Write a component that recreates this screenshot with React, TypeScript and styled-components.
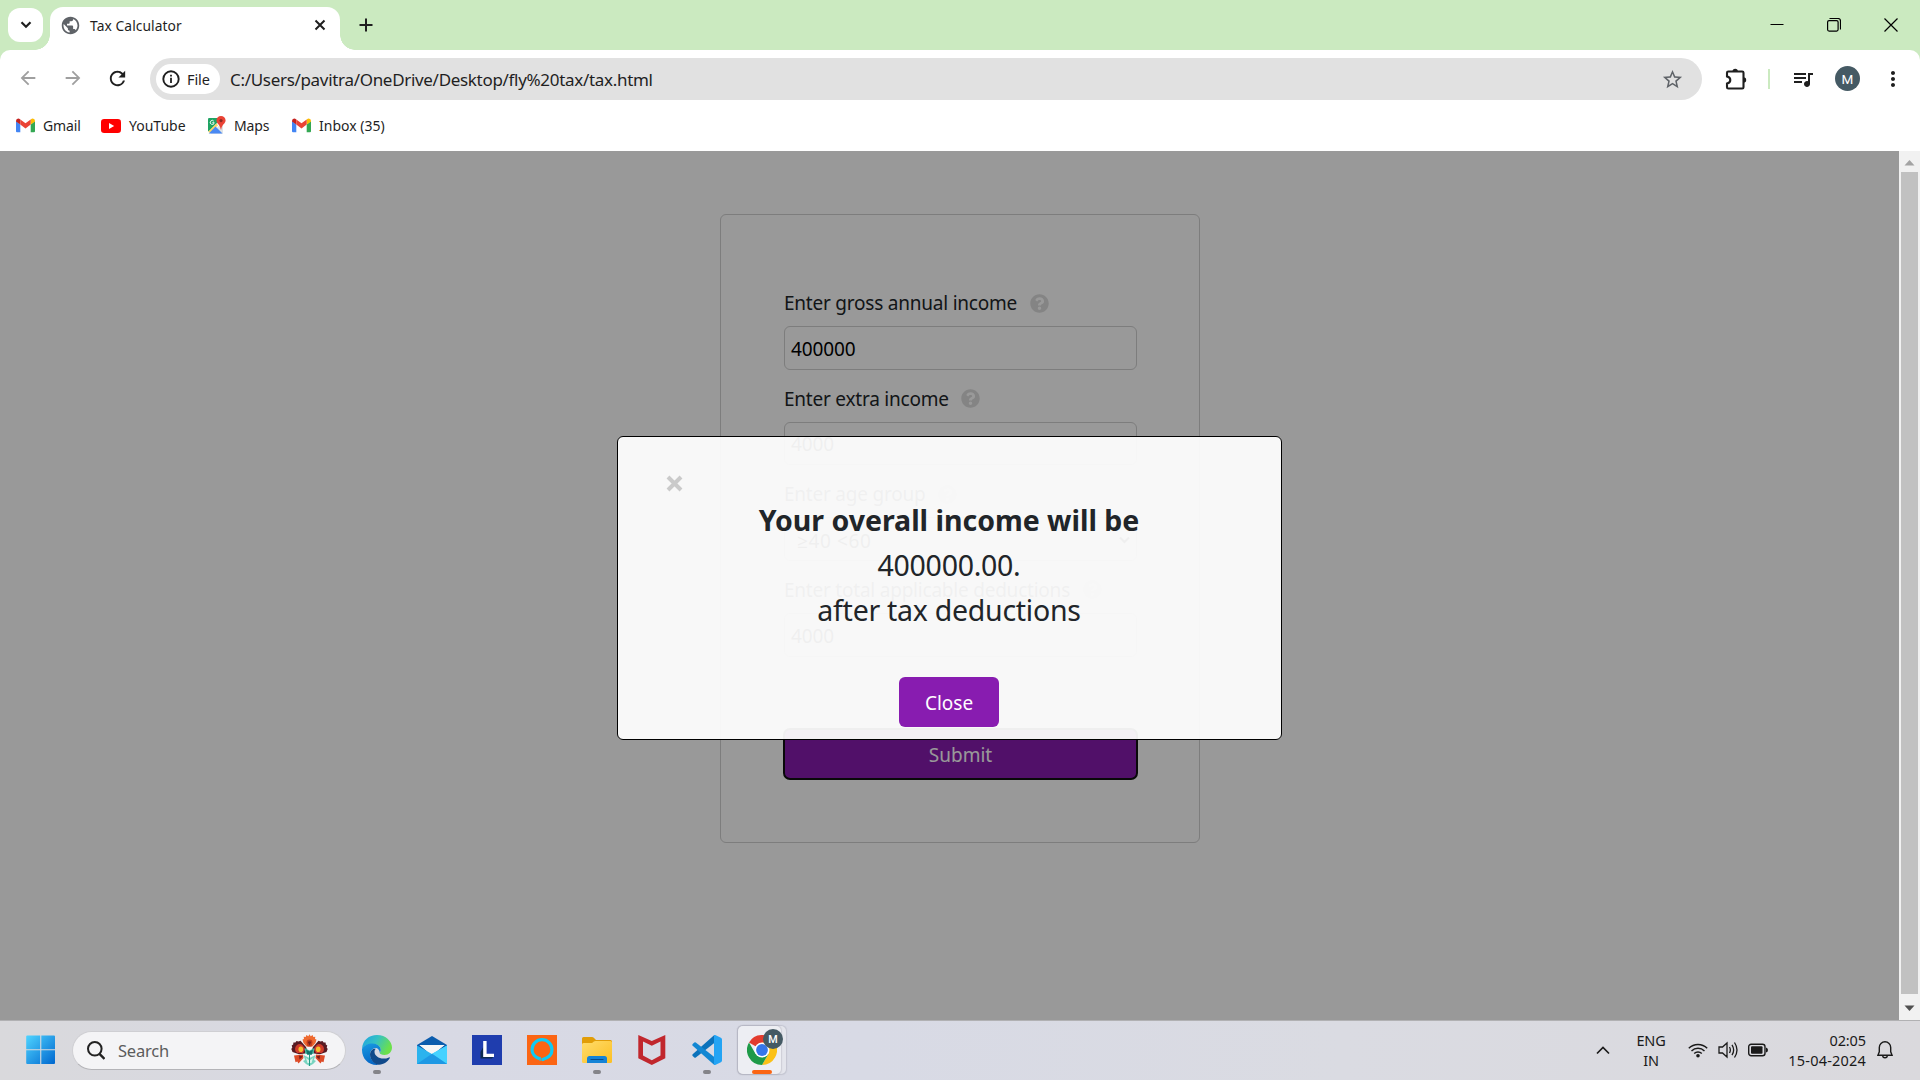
import React from 'react';
import styled, { createGlobalStyle } from 'styled-components';
import { MdPublic, MdRefresh, MdStarBorder, MdQueueMusic, MdMoreVert, MdArrowBack, MdArrowForward } from 'react-icons/md';
import { FaQuestionCircle } from 'react-icons/fa';

const Global = createGlobalStyle`
  * { box-sizing: border-box; }
  body { margin: 0; overflow: hidden; font-family: "Noto Sans", "Open Sans", sans-serif; color: #1f1f1f; }
  button, input { font-family: inherit; }
  svg { display: block; flex: none; }
`;

const Screen = styled.div`
  width: 1920px;
  height: 1080px;
  display: flex;
  flex-direction: column;
  overflow: hidden;
`;

const Label = styled.span<{ $size: number; $track?: number }>`
  font-size: ${p => p.$size}px;
  letter-spacing: ${p => p.$track ?? 0}px;
  line-height: 20px;
  white-space: nowrap;
`;

/* ---------- browser chrome ---------- */

const TabStrip = styled.div`
  height: 50px;
  background: #cbeac0;
  display: flex;
  align-items: flex-start;
  padding: 7px 0 0 8px;
`;

const TabSearch = styled.div`
  width: 35px;
  height: 34px;
  margin: 1px 7px 0 0;
  border-radius: 12px;
  background: #fff;
  display: grid;
  place-items: center;
`;

const Tab = styled.div`
  position: relative;
  width: 290px;
  height: 43px;
  padding: 0 14px 7px 10px;
  background: #fff;
  border-radius: 13px 13px 0 0;
  display: flex;
  align-items: center;
  &::before, &::after {
    content: '';
    position: absolute;
    bottom: 0;
    width: 15px;
    height: 15px;
  }
  &::before { left: -15px; background: radial-gradient(circle at 0 0, transparent 14.5px, #fff 15px); }
  &::after { right: -15px; background: radial-gradient(circle at 100% 0, transparent 14.5px, #fff 15px); }
`;

const TabTitle = styled(Label)`
  flex: 1;
  margin-left: 9px;
  padding-top: 1px;
`;

const NewTab = styled.div`
  margin: 11px 0 0 18.5px;
`;

const WindowControls = styled.div`
  margin: 11px 22px 0 auto;
  display: flex;
  align-items: center;
  gap: 43px;
`;

const ToolbarBack = styled.div`
  background: #cbeac0;
`;

const Toolbar = styled.div`
  height: 57px;
  background: #fff;
  border-radius: 10px 10px 0 0;
  display: flex;
  align-items: center;
  padding-left: 17px;
`;

const Nav = styled.div`
  display: flex;
  gap: 22.5px;
  color: #9f9f9f;
  width: 133px;
`;

const Omnibox = styled.div`
  width: 1552px;
  height: 42px;
  margin-top: 1px;
  padding: 0 18px 0 6px;
  border-radius: 21px;
  background: #e1e1e1;
  display: flex;
  align-items: center;
`;

const FileChip = styled.div`
  width: 64px;
  height: 30px;
  border-radius: 15px;
  background: #fff;
  display: flex;
  align-items: center;
  gap: 7px;
  padding-left: 6px;
  margin-right: 10px;
`;

const Url = styled(Label)`
  flex: 1;
  padding-top: 1px;
`;

const Actions = styled.div`
  display: flex;
  align-items: center;
  margin-left: 22px;
`;

const Divider = styled.div`
  width: 2px;
  height: 20px;
  margin: 0 21px 0 20px;
  background: #cbeac0;
`;

const Avatar = styled.div<{ $d: number }>`
  width: ${p => p.$d}px;
  height: ${p => p.$d}px;
  border-radius: 50%;
  background: #455a64;
  color: #fff;
  display: grid;
  place-items: center;
  font: ${p => (p.$d > 22 ? 400 : 500)} ${p => p.$d * 0.54}px Roboto, sans-serif;
`;

const Bookmarks = styled.div`
  height: 44px;
  background: #fff;
  display: flex;
  align-items: center;
  padding: 0 0 7px 16px;
`;

const Bookmark = styled.div<{ $w: number; $gap: number }>`
  width: ${p => p.$w}px;
  display: flex;
  align-items: center;
  gap: ${p => p.$gap}px;
`;

/* ---------- web page ---------- */

const Viewport = styled.div`
  height: 869px;
  display: flex;
`;

const Page = styled.main`
  position: relative;
  flex: 1;
  background: #fff;
  color: #212529;
`;

const Card = styled.div`
  width: 480px;
  height: 629px;
  margin: 63px 0 0 720px;
  padding: 73px 62px 0 63px;
  border: 1px solid #d0d0d0;
  border-radius: 6px;
  display: flex;
  flex-direction: column;
`;

const Field = styled.div`
  margin-bottom: 13.8px;
`;

const FieldLabel = styled.label`
  height: 30px;
  margin-bottom: 8px;
  display: flex;
  align-items: center;
  gap: 12.500px;
  font-size: 19px;
  letter-spacing: -0.22px;
  white-space: nowrap;
  svg { color: #dcdcdc; }
`;

const Box = styled.div<{ $indent?: boolean }>`
  height: 43.8px;
  border: 1px solid #d0d0d0;
  border-radius: 6px;
  padding: ${p => (p.$indent ? 3 : 2)}px 5px 0 ${p => (p.$indent ? 12 : 6)}px;
  display: flex;
  align-items: center;
  justify-content: space-between;
  font-size: 19px;
  letter-spacing: ${p => (p.$indent ? 0.6 : -0.1)}px;
  color: #000;
`;

const Submit = styled.button`
  height: 52px;
  margin: 58px -1px 0;
  padding: 2px 0 0;
  border: 2px solid #101010;
  border-radius: 7px;
  background: #881cb0;
  color: #fff;
  font-size: 19px;
`;

const Overlay = styled.div`
  position: absolute;
  inset: 0;
  background: rgba(0, 0, 0, 0.4);
  display: flex;
  justify-content: center;
  align-items: flex-start;
`;

const Modal = styled.div`
  position: relative;
  width: 665px;
  height: 304px;
  margin-top: 285px;
  padding: 61px 1px 0 0;
  border: 1px solid #000;
  border-radius: 6px;
  background: rgba(254, 254, 254, 0.94);
  display: flex;
  flex-direction: column;
  align-items: center;
`;

const Dismiss = styled.div`
  position: absolute;
  left: 48px;
  top: 38px;
`;

const Message = styled.p`
  margin: 0 0 44px;
  font-size: 28.5px;
  line-height: 45px;
  letter-spacing: -0.27px;
  text-align: center;
`;

const Strong = styled.strong`
  letter-spacing: -0.02px;
`;

const CloseButton = styled.button`
  width: 100px;
  height: 50px;
  padding: 2px 0 0;
  border: 0;
  border-radius: 6px;
  background: #881cb0;
  color: #fff;
  font-size: 19px;
`;

const Scrollbar = styled.div`
  width: 21px;
  background: #f1f1f1;
  display: flex;
  flex-direction: column;
  align-items: center;
`;

const Thumb = styled.div`
  width: 17px;
  height: 822px;
  background: #c1c1c1;
`;

/* ---------- taskbar ---------- */

const Taskbar = styled.footer`
  height: 60px;
  border-top: 1px solid #b1b1b3;
  background: linear-gradient(90deg, #d9d9dc 0, #d8d9e4 22%, #d8dae5 45%, #dadbe2 70%, #dad9dd 100%);
  display: flex;
  align-items: center;
  padding: 0 27px 1px 26px;
  color: #1a1a1a;
`;

const Search = styled.div`
  width: 274px;
  height: 39px;
  margin: 0 16px 0 16px;
  padding: 0 17px 0 14px;
  border-radius: 20px;
  border: 1px solid #cfcfd3;
  border-bottom-color: #b4b4b8;
  background: #f4f4f6;
  display: flex;
  align-items: center;
  color: #5c5c5c;
`;

const SearchText = styled(Label)`
  flex: 1;
  margin-left: 13px;
  padding-top: 1px;
`;

const Apps = styled.div`
  display: flex;
  gap: 25px;
`;

const AppSlot = styled.div<{ $running?: boolean; $active?: boolean }>`
  position: relative;
  width: 30px;
  height: 30px;
  display: grid;
  place-items: center;
  &::after {
    content: '';
    display: ${p => (p.$running || p.$active ? 'block' : 'none')};
    position: absolute;
    top: 35px;
    left: ${p => (p.$active ? 5 : 11)}px;
    width: ${p => (p.$active ? 20 : 8)}px;
    height: 4px;
    border-radius: 2px;
    background: ${p => (p.$active ? '#fb6514' : '#848489')};
  }
`;

const ActiveTile = styled.div<{ $behind?: boolean }>`
  position: absolute;
  left: -9px;
  top: -9px;
  width: ${p => (p.$behind ? 48 : 43)}px;
  height: 48px;
  border-radius: 5px;
  background: ${p => (p.$behind ? '#e4e5ec' : '#edeef3')};
  box-shadow: 0 0 1px 0.5px rgba(120, 120, 135, 0.2);
`;

const Layer = styled.div`
  position: relative;
`;

const Badge = styled.div`
  position: absolute;
  left: 16px;
  top: -6px;
`;

const Tray = styled.div`
  margin-left: auto;
  display: flex;
  align-items: center;
`;

const Stack = styled.div<{ $align: string; $w: number }>`
  width: ${p => p.$w}px;
  display: flex;
  flex-direction: column;
  align-items: ${p => p.$align};
`;

const Spacer = styled.div<{ $w: number }>`
  width: ${p => p.$w}px;
`;

/* ---------- drawings ---------- */

const Gmail = () => (
  <svg width="19" height="15" viewBox="0 0 19 15">
    <path d="M0 3v10.200a1 1 0 0 0 1 1h3.300V6.500Z" fill="#4285f4" />
    <path d="M19 3v10.200a1 1 0 0 1-1 1h-3.300V6.500Z" fill="#34a853" />
    <path d="M0 3Q0 .5 2.200.5q1 0 2.100.9V6.600L0 3.400Z" fill="#c5221f" />
    <path d="M19 3Q19 .5 16.800.5q-1 0-2.100.9V6.600L19 3.400Z" fill="#fbbc04" />
    <path d="M4.300 1.400 9.500 5.300l5.200-3.900v5.200L9.500 10.500 4.300 6.600Z" fill="#ea4335" />
  </svg>
);

const YouTube = () => (
  <svg width="20" height="14" viewBox="0 0 20 14">
    <rect width="20" height="14" rx="3.200" fill="#f00" />
    <path d="M8 4v6l5.200-3Z" fill="#fff" />
  </svg>
);

const Maps = () => (
  <svg width="19" height="19" viewBox="0 0 19 19">
    <rect x="1" y="2" width="15" height="16" rx="1.500" fill="#dfe3e6" />
    <path d="M1 15V3.200Q1 2 2.200 2H12v3L2.500 15.500Z" fill="#1fa463" />
    <path d="m1.200 16 12-12 2.600 2L3.200 18H2Q1 18 1 17Z" fill="#fff" />
    <path d="m1.300 15.500 8-8 1.800 1.800-8 8Z" fill="#fdd663" />
    <path d="m8.500 10.500 7 7H1.800Z" fill="#4a89f3" />
    <path d="M6.800 5.200a2 2 0 1 0 .4 1.500H5.300" fill="none" stroke="#fff" strokeWidth="0.9" />
    <path d="M14 0a4.600 4.600 0 0 0-4.600 4.600c0 3 3.900 4.400 4.300 8.700.1.500.500.500.600 0 .3-4.300 4.300-5.700 4.300-8.700A4.600 4.600 0 0 0 14 0Z" fill="#ea4335" />
    <circle cx="14" cy="4.600" r="1.600" fill="#8c2a22" />
  </svg>
);

const Flower = () => (
  <svg width="37" height="33" viewBox="0 0 37 33">
    <path d="m12.500 9-1-3.500L13 5l-.3-2.200 2 .2.600-2 2 1.200L18.500.3l1.200 1.900 2-1.200.6 2 2-.2L24 5l1.500.5-1 3.500-3 3.500h-6Z" fill="#ee6a30" />
    <path d="M15.500 8.500q0-3 3-3t3 3l-1 4h-4Z" fill="#c63d1c" />
    <path d="M16.800 8q1.700-1.500 3.400 0l-1.700 3.500Z" fill="#7b2218" />
    <path d="M1.500 18 .3 15l1-1.500-.6-2 1.500-1 .2-2 2 0L5.500 7l2 .6 2-.8L15 13l1 3-2 3.500-6 .8Z" fill="#571a22" />
    <path d="M35.500 18l1.200-3-1-1.500.6-2-1.500-1-.2-2-2 0L31.500 7l-2 .6-2-.8L22 13l-1 3 2 3.500 6 .8Z" fill="#571a22" />
    <path d="M4 14.500Q5 10 9 10q3.500.5 5 5.500L12 19H6.500Q4 18 4 14.500Z" fill="#cf3a2a" />
    <path d="M33 14.500Q32 10 28 10q-3.500.5-5 5.500l2 3.500h5.500q2.500-1 2.500-4.500Z" fill="#cf3a2a" />
    <ellipse cx="9.800" cy="15.300" rx="2.300" ry="2.800" fill="#f4bd2c" />
    <ellipse cx="27.200" cy="15.300" rx="2.300" ry="2.800" fill="#f4bd2c" />
    <path d="m3 21.500 9-1 .5 3.500-5 5.500-1.200-2-1.800.8Z" fill="#dd4b27" />
    <path d="m34 21.500-9-1-.5 3.500 5 5.500 1.200-2 1.800.8Z" fill="#dd4b27" />
    <path d="m8 21.500 4 1-3.500 3Zm21 0-4 1 3.500 3Z" fill="#7c1c1c" />
    <path d="m13.500 14 5 2.500 5-2.500-1 6h-8Z" fill="#44b9a2" />
    <path d="m15 15.500 3.500 2 3.500-2-1.200 5.200h-4.600Z" fill="#11756c" />
    <path d="m12.500 21 6 3 6-3-1.500 5 2 1-3 3-3.500 2-3.500-2-3-3 2-1Z" fill="#79d4c0" />
    <path d="m15 24 3.500 2.500L22 24l-1.500 5h-4Z" fill="#d9f3ea" />
    <path d="M18 20h1v12h-1Z" fill="#1e9c86" />
  </svg>
);

const Windows = () => (
  <svg width="30" height="30" viewBox="0 0 30 30">
    <defs>
      <linearGradient id="win" x1="0" y1="0" x2="1" y2="1">
        <stop offset="0" stopColor="#4fd4ff" />
        <stop offset="1" stopColor="#0067cf" />
      </linearGradient>
    </defs>
    <path d="M1.200.5H14.200V14.200H.200V1.500a1 1 0 0 1 1-1ZM15.300.5H28a1 1 0 0 1 1 1V14.200H15.300ZM.2 15.300h14V29H1.200a1 1 0 0 1-1-1ZM15.300 15.300H29V28a1 1 0 0 1-1 1H15.300Z" fill="url(#win)" />
  </svg>
);

const Edge = () => (
  <svg width="30" height="30" viewBox="0 0 30 30">
    <defs>
      <linearGradient id="e1" x1="0" y1="0" x2="1" y2=".4">
        <stop offset="0" stopColor="#1da1e6" />
        <stop offset=".5" stopColor="#35c1c4" />
        <stop offset="1" stopColor="#6be04c" />
      </linearGradient>
      <linearGradient id="e2" x1="0" y1="0" x2=".3" y2="1">
        <stop offset="0" stopColor="#199be2" />
        <stop offset="1" stopColor="#0667c6" />
      </linearGradient>
    </defs>
    <path d="M0 14C.5 5 7 0 15 0c9 0 15 6.500 15 12.500C30 17 26.800 20 22.500 20c-3 0-4.700-.8-4.700-1.900 0-.8 1-1.300 1-3.100C18.800 12 16 9 11 9 6 9 1.500 11 0 14Z" fill="url(#e1)" />
    <path d="M0 14C1.500 10.500 6 8.500 10.500 8.500c5 0 8.300 3 8.300 6.500 0 1.500-.8 2-1 3 0-3-2-5-4.300-5-3 0-5.500 3-5.500 6.500 0 5 4 9 9 10.300C7 31 0 24 0 15Z" fill="url(#e2)" />
    <path d="M11.500 13.700C8.800 15 8 17.500 8 19.500c0 6 5 10 9 10.300 5-.3 8.500-3 10.700-6.500.4-.8-.2-1.200-.8-.9-1.800.9-3.400 1.200-5.400 1.200-5 0-9-3-9-6.800 0-1.200.5-2.300 1.500-3Z" fill="#114a8b" />
  </svg>
);

const Mail = () => (
  <svg width="30" height="30" viewBox="0 0 30 30">
    <path d="M0 10 15 1l15 9v6H0Z" fill="#0b5cad" />
    <path d="M2.500 10h25L17 19h-4Z" fill="#f6f6f6" />
    <path d="M0 10.500 15 19 30 10.500V29H0Z" fill="#2bb3ee" />
    <path d="M2.500 10h25L15 18.700Z" fill="#f6f6f6" />
    <path d="M30 10.500V29L15 18.700Z" fill="#45d2ff" />
    <path d="M0 29 15 18.700 30 29Z" fill="#1e98e4" />
  </svg>
);

const LApp = () => (
  <svg width="30" height="30" viewBox="0 0 30 30">
    <path d="M0 0h30v30H0Z" fill="#1f3dae" />
    <path d="M8.500 23.500V17l2.700-5V22h10l-1.200 1.500Z" fill="#0d2b50" />
    <path d="M11.200 6h3.400v12.700H22V22H11.200Z" fill="#fff" />
  </svg>
);

const Alexa = () => (
  <svg width="30" height="30" viewBox="0 0 30 30">
    <path d="M0 0h30v30H0Z" fill="#fb6514" />
    <path d="M12.800 23.700C8.500 22.500 5 19.200 5 14.700a10 10 0 1 1 20 0c0 5-4.500 8.500-10 10" fill="none" stroke="#0fcbf5" strokeWidth="3.200" />
    <path d="M12.500 22v3.700h1.300V22ZM14.500 23.200q4 0 5.500-1l-1.500 2.300Q16.500 26 14.500 26Z" fill="#0fcbf5" />
  </svg>
);

const Folder = () => (
  <svg width="30" height="30" viewBox="0 0 30 30">
    <defs>
      <linearGradient id="fo" x1="0" y1="0" x2="1" y2="1">
        <stop offset="0" stopColor="#ffdc6c" />
        <stop offset="1" stopColor="#fcbf22" />
      </linearGradient>
    </defs>
    <path d="M0 3.500Q0 2 1.500 2H10q1 0 1.800.8L14 5h14.500Q30 5 30 6.500V12H0Z" fill="#e19d08" />
    <path d="M0 9.500Q0 8 1.500 8H9q1 0 1.800-.6l1-.8Q12.500 6 13.500 6h15Q30 6 30 7.500v19.200Q30 28 28.500 28h-27Q0 28 0 26.700Z" fill="url(#fo)" />
    <path d="M5 28v-4.500Q5 21 7.500 21h15Q25 21 25 23.500V28Z" fill="#1583d6" />
    <path d="M8.500 24h13v1h-13Z" fill="#0a4c8a" />
  </svg>
);

const McAfee = () => (
  <svg width="30" height="30" viewBox="0 0 30 30">
    <path d="M1.300 0 14.800 6 28.300 0v23.200L14.800 30 1.300 23.200ZM6 6.500V20.500l8.800 4.800 8.700-4.800V6.500l-8.700 4.200Z" fill="#c1272d" fillRule="evenodd" />
  </svg>
);

const VsCode = () => (
  <svg width="30" height="30" viewBox="0 0 30 30">
    <path d="M22.300 0 .7 19.300q-.8.8 0 1.600l1.600 1.500q.7.600 1.500.1L22.300 8Z" fill="#0b72bb" />
    <path d="M22.300 30 .7 10.700q-.8-.8 0-1.600l1.600-1.500q.7-.6 1.500-.1L22.300 22Z" fill="#1287d3" />
    <path d="M22 0q.6-.2 1.200.1l5.700 2.700Q30 3.300 30 4.500v21q0 1.200-1.100 1.700l-5.700 2.700q-.6.200-1.200.1Z" fill="#24a4f4" />
  </svg>
);

const ChromeLogo = () => (
  <svg width="30" height="30" viewBox="0 0 30 30">
    <path d="M15 15 2 7.500A15 15 0 0 1 28 7.500Z" fill="#e33b2e" />
    <path d="M15 7.500H28A15 15 0 0 1 15 30l6.500-11.200Z" fill="#fbc116" />
    <path d="M21.500 18.800 15 30A15 15 0 0 1 2 7.500l6.500 11.300Z" fill="#1e9a48" />
    <circle cx="15" cy="15" r="7.500" fill="#fff" />
    <circle cx="15" cy="15" r="5.900" fill="#3576ea" />
  </svg>
);

const Help = () => <FaQuestionCircle size={19} />;

const pinned: { icon: React.ReactNode; running?: boolean }[] = [
  { icon: <Edge />, running: true },
  { icon: <Mail /> },
  { icon: <LApp /> },
  { icon: <Alexa /> },
  { icon: <Folder />, running: true },
  { icon: <McAfee /> },
  { icon: <VsCode />, running: true },
];

export default function App() {
  return (
    <Screen>
      <Global />
      <TabStrip>
        <TabSearch>
          <svg width="12" height="8" viewBox="0 0 12 8"><path d="m1.500 1.300 4.500 4.500 4.500-4.500" fill="none" stroke="#1f1f1f" strokeWidth="2.200" /></svg>
        </TabSearch>
        <Tab>
          <MdPublic size={21} color="#5f6368" />
          <TabTitle $size={13.8} $track={0.08}>Tax Calculator</TabTitle>
          <svg width="12" height="12" viewBox="0 0 12 12"><path d="m1.500 1.500 9 9m0-9-9 9" stroke="#1f1f1f" strokeWidth="2" /></svg>
        </Tab>
        <NewTab>
          <svg width="14" height="14" viewBox="0 0 14 14"><path d="M7 .5v13M.5 7h13" stroke="#1f1f1f" strokeWidth="2" /></svg>
        </NewTab>
        <WindowControls>
          <svg width="14" height="14" viewBox="0 0 14 14"><path d="M.5 6.500h13" stroke="#000" /></svg>
          <svg width="14" height="14" viewBox="0 0 14 14"><path d="M2.500.5H11a2.500 2.500 0 0 1 2.500 2.500v8.500" fill="none" stroke="#000" strokeWidth="1.200" /><rect x=".6" y="2.600" width="10.500" height="10.500" rx="1.500" fill="none" stroke="#000" strokeWidth="1.200" /></svg>
          <svg width="14" height="14" viewBox="0 0 14 14"><path d="m.5.5 13 13m0-13-13 13" stroke="#000" strokeWidth="1.200" /></svg>
        </WindowControls>
      </TabStrip>

      <ToolbarBack>
        <Toolbar>
          <Nav>
            <MdArrowBack size={22} />
            <MdArrowForward size={22} />
            <MdRefresh size={23} color="#1f1f1f" />
          </Nav>
          <Omnibox>
            <FileChip>
              <svg width="18" height="18" viewBox="0 0 18 18"><circle cx="9" cy="9" r="7.700" fill="none" stroke="#1f1f1f" strokeWidth="1.900" /><path d="M9 7.800v5.200M9 4.700v1.900" stroke="#1f1f1f" strokeWidth="1.800" /></svg>
              <Label $size={14.500} $track={-0.1}>File</Label>
            </FileChip>
            <Url $size={17} $track={-0.31}>C:/Users/pavitra/OneDrive/Desktop/fly%20tax/tax.html</Url>
            <MdStarBorder size={23} color="#5f6368" />
          </Omnibox>
          <Actions>
            <svg width="24" height="24" viewBox="0 0 24 24">
              <path d="M5 4.500h13.200a1.300 1.300 0 0 1 1.300 1.300v14.400a1.300 1.300 0 0 1-1.300 1.300H4.300A1.300 1.300 0 0 1 3 20.200v-3.700q3.300-.7 3.300-3.500T3 9.500V5.800a1.300 1.300 0 0 1 1.300-1.300Z" fill="none" stroke="#1f1f1f" strokeWidth="2.100" />
              <path d="M8.500 4.500a2.700 2.700 0 0 1 5.400 0ZM19.500 10.200a2.700 2.700 0 0 1 0 5.400Z" fill="#1f1f1f" />
            </svg>
            <Divider />
            <MdQueueMusic size={24} color="#1f1f1f" />
            <Spacer $w={20} />
            <Avatar $d={25}>M</Avatar>
            <Spacer $w={21} />
            <MdMoreVert size={24} color="#1f1f1f" />
          </Actions>
        </Toolbar>
      </ToolbarBack>

      <Bookmarks>
        <Bookmark $w={85} $gap={8}><Gmail /><Label $size={14} $track={-0.1}>Gmail</Label></Bookmark>
        <Bookmark $w={106} $gap={8}><YouTube /><Label $size={14} $track={0}>YouTube</Label></Bookmark>
        <Bookmark $w={85} $gap={8}><Maps /><Label $size={14} $track={-0.1}>Maps</Label></Bookmark>
        <Bookmark $w={110} $gap={8}><Gmail /><Label $size={14} $track={0}>Inbox (35)</Label></Bookmark>
      </Bookmarks>

      <Viewport>
        <Page>
          <Card>
            <Field><FieldLabel>Enter gross annual income <Help /></FieldLabel><Box>400000</Box></Field>
            <Field><FieldLabel>Enter extra income <Help /></FieldLabel><Box>4000</Box></Field>
            <Field>
              <FieldLabel>Enter age group <Help /></FieldLabel>
              <Box $indent>
                ≥40 &lt;60
                <svg width="13" height="9" viewBox="0 0 13 9"><path d="m2 1.500 4.500 4.500L11 1.500" fill="none" stroke="#000" strokeWidth="2" /></svg>
              </Box>
            </Field>
            <Field><FieldLabel>Enter total applicable deductions <Help /></FieldLabel><Box>4000</Box></Field>
            <Submit>Submit</Submit>
          </Card>
          <Overlay>
            <Modal>
              <Dismiss>
                <svg width="17" height="17" viewBox="0 0 17 17"><path d="m2 2 13 13m0-13L2 15" stroke="#cacaca" strokeWidth="4" /></svg>
              </Dismiss>
              <Message>
                <Strong>Your overall income will be</Strong><br />
                400000.00.<br />
                after tax deductions
              </Message>
              <CloseButton>Close</CloseButton>
            </Modal>
          </Overlay>
        </Page>
        <Scrollbar>
          <svg width="21" height="21" viewBox="0 0 21 21"><path d="m10.500 9 5 5.500h-10Z" fill="#a3a3a3" /></svg>
          <Thumb />
          <svg width="21" height="26" viewBox="0 0 21 26"><path d="m10.500 17 5-5.500h-10Z" fill="#505050" /></svg>
        </Scrollbar>
      </Viewport>

      <Taskbar>
        <Windows />
        <Search>
          <svg width="18" height="19" viewBox="0 0 18 19"><circle cx="7.800" cy="7.800" r="6.800" fill="none" stroke="#222" strokeWidth="2" /><path d="m12.500 12.800 5 5.200" stroke="#222" strokeWidth="2.400" /></svg>
          <SearchText $size={16.500} $track={-0.2}>Search</SearchText>
          <Flower />
        </Search>
        <Apps>
          {pinned.map((a, i) => <AppSlot key={i} $running={a.running}>{a.icon}</AppSlot>)}
          <AppSlot $active>
            <ActiveTile $behind />
            <ActiveTile />
            <Layer><ChromeLogo /></Layer>
            <Badge><Avatar $d={20}>M</Avatar></Badge>
          </AppSlot>
        </Apps>
        <Tray>
          <svg width="14" height="9" viewBox="0 0 14 9"><path d="m1 7.500 6-6 6 6" fill="none" stroke="#1a1a1a" strokeWidth="1.700" /></svg>
          <Spacer $w={21} />
          <Stack $align="center" $w={40}>
            <Label $size={14.500} $track={-0.2}>ENG</Label>
            <Label $size={14.500} $track={-0.2}>IN</Label>
          </Stack>
          <Spacer $w={17} />
          <svg width="20" height="16" viewBox="0 0 20 16"><g fill="none" stroke="#1a1a1a" strokeWidth="1.400"><path d="M.8 6.300a13 13 0 0 1 18.400 0M3.500 9a9.200 9.200 0 0 1 13 0M6.200 11.500a5.400 5.400 0 0 1 7.600 0" /></g><circle cx="10" cy="13.700" r="1.800" fill="#1a1a1a" /></svg>
          <Spacer $w={10} />
          <svg width="20" height="18" viewBox="0 0 20 18"><g fill="none" stroke="#1a1a1a" strokeWidth="1.300"><path d="M1 6h3.500L9 2v14l-4.500-4H1ZM11.500 6q1.700 3 0 6M14 3.800q3.300 5.200 0 10.400M16.500 1.500q5 7.500 0 15" /></g></svg>
          <Spacer $w={10} />
          <svg width="20" height="14" viewBox="0 0 20 14"><rect x=".7" y="1.200" width="16.300" height="11.600" rx="2.500" fill="none" stroke="#1a1a1a" strokeWidth="1.400" /><rect x="3" y="3.300" width="11.500" height="7.400" rx="1" fill="#1a1a1a" /><path d="M18 4.500q2 .5 2 2.500t-2 2.500Z" fill="#1a1a1a" /></svg>
          <Spacer $w={10} />
          <Stack $align="flex-end" $w={88}>
            <Label $size={14.500} $track={-0.1}>02:05</Label>
            <Label $size={14.500} $track={0.2}>15-04-2024</Label>
          </Stack>
          <Spacer $w={11} />
          <svg width="16" height="18" viewBox="0 0 16 18"><path d="M8 .8a5.700 5.700 0 0 0-5.700 5.700v4.300L.9 14.300h14.200l-1.400-3.500V6.500A5.700 5.700 0 0 0 8 .8ZM5.700 14.500a2.300 2.300 0 0 0 4.600 0" fill="none" stroke="#1a1a1a" strokeWidth="1.400" /></svg>
        </Tray>
      </Taskbar>
    </Screen>
  );
}
